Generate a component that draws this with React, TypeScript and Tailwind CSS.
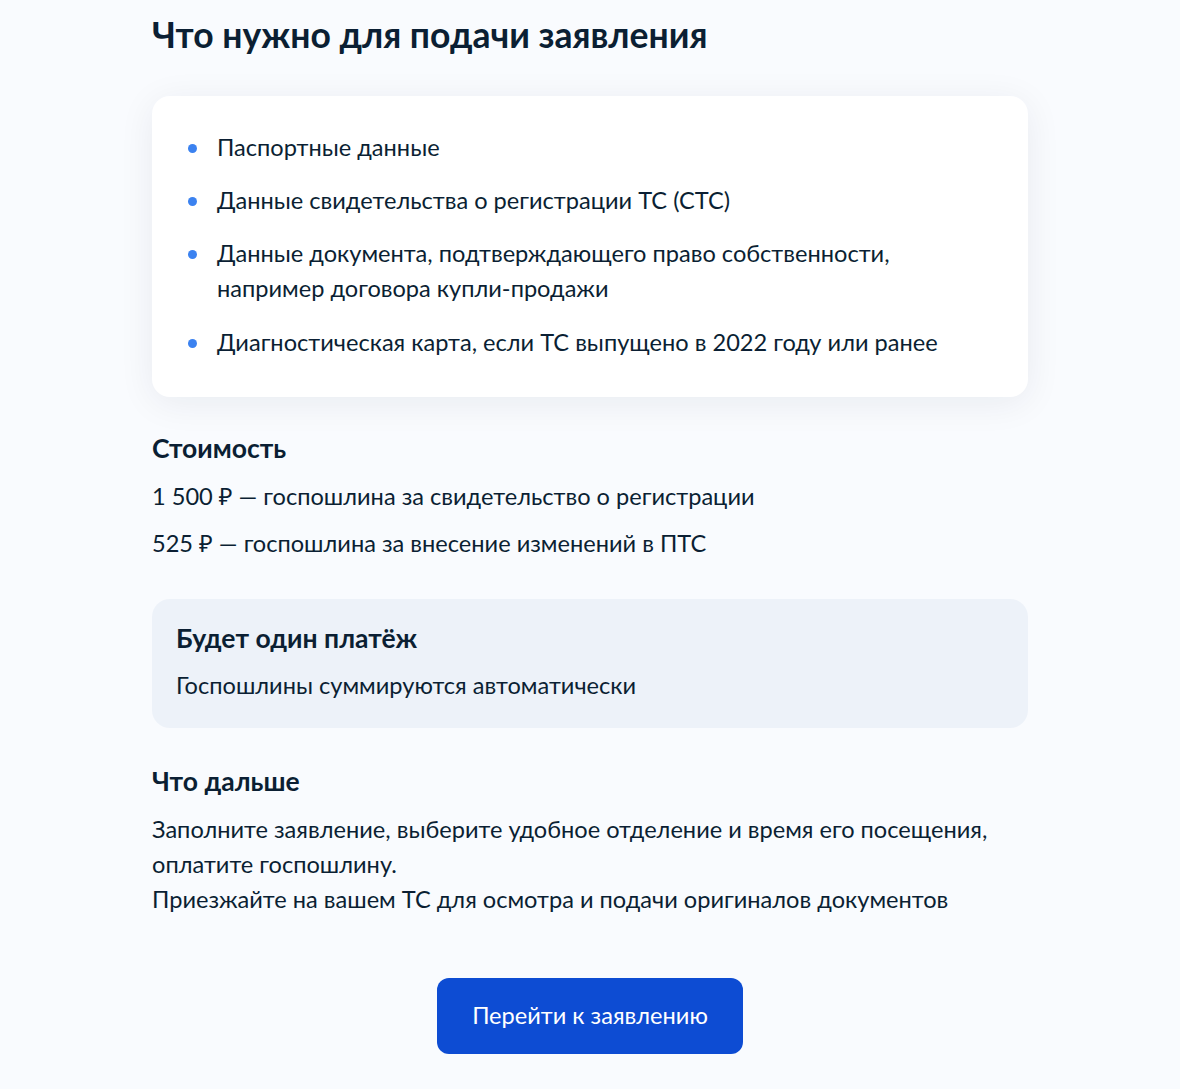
export default function App() {
  const docs = [
    "Паспортные данные",
    "Данные свидетельства о регистрации ТС (СТС)",
    "Данные документа, подтверждающего право собственности, например договора купли-продажи",
    "Диагностическая карта, если ТС выпущено в 2022 году или ранее",
  ];

  return (
    <div
      className="min-h-[1089px] bg-[#f9fbfe] text-[#0b1f33]"
      style={{ fontFamily: "Lato, 'Noto Sans', sans-serif" }}
    >
      <div className="mx-auto w-[876px] pt-[13px] pb-9">
        <h1 className="text-[35.5px] leading-[44px] font-bold">
          Что нужно для подачи заявления
        </h1>

        <div className="mt-[39px] rounded-[18px] bg-white pl-[36px] pr-[30px] pt-[34px] pb-[37px] shadow-[0_6px_36px_rgba(11,31,51,0.07)]">
          <ul className="flex flex-col gap-[18px]">
            {docs.map((d, i) => (
              <li
                key={d}
                className={`flex gap-[20px] text-[23.6px] leading-[35px] ${i === 3 ? "mt-[1px]" : ""}`}
              >
                <span className="mt-[14px] h-[9px] w-[9px] shrink-0 rounded-full bg-[#3b82f0]" />
                <span className="max-w-[740px]">{d}</span>
              </li>
            ))}
          </ul>
        </div>

        <h2 className="mt-[33px] text-[26.5px] leading-[36px] font-bold">Стоимость</h2>
        <p className="mt-[13px] text-[23.6px] leading-[35px]">
          1 500 ₽ — госпошлина за свидетельство о регистрации
        </p>
        <p className="mt-[12px] text-[23.6px] leading-[35px]">
          525 ₽ — госпошлина за внесение изменений в ПТС
        </p>

        <div className="mt-[38px] rounded-[18px] bg-[#edf2f9] px-[24px] pt-[21px] pb-[25px]">
          <h3 className="text-[26.5px] leading-[36px] font-bold">Будет один платёж</h3>
          <p className="mt-[12px] text-[23.6px] leading-[35px]">
            Госпошлины суммируются автоматически
          </p>
        </div>

        <h2 className="mt-[35px] text-[26.5px] leading-[36px] font-bold">Что дальше</h2>
        <p className="mt-[13px] text-[23.6px] leading-[35px] max-w-[860px]">
          Заполните заявление, выберите удобное отделение и время его посещения,
          оплатите госпошлину.
          <br />
          Приезжайте на вашем ТС для осмотра и подачи оригиналов документов
        </p>

        <div className="mt-[61px] flex justify-center">
          <button className="h-[76px] w-[306px] rounded-[12px] bg-[#0d4cd3] text-[23.6px] text-white">
            Перейти к заявлению
          </button>
        </div>
      </div>
    </div>
  );
}
